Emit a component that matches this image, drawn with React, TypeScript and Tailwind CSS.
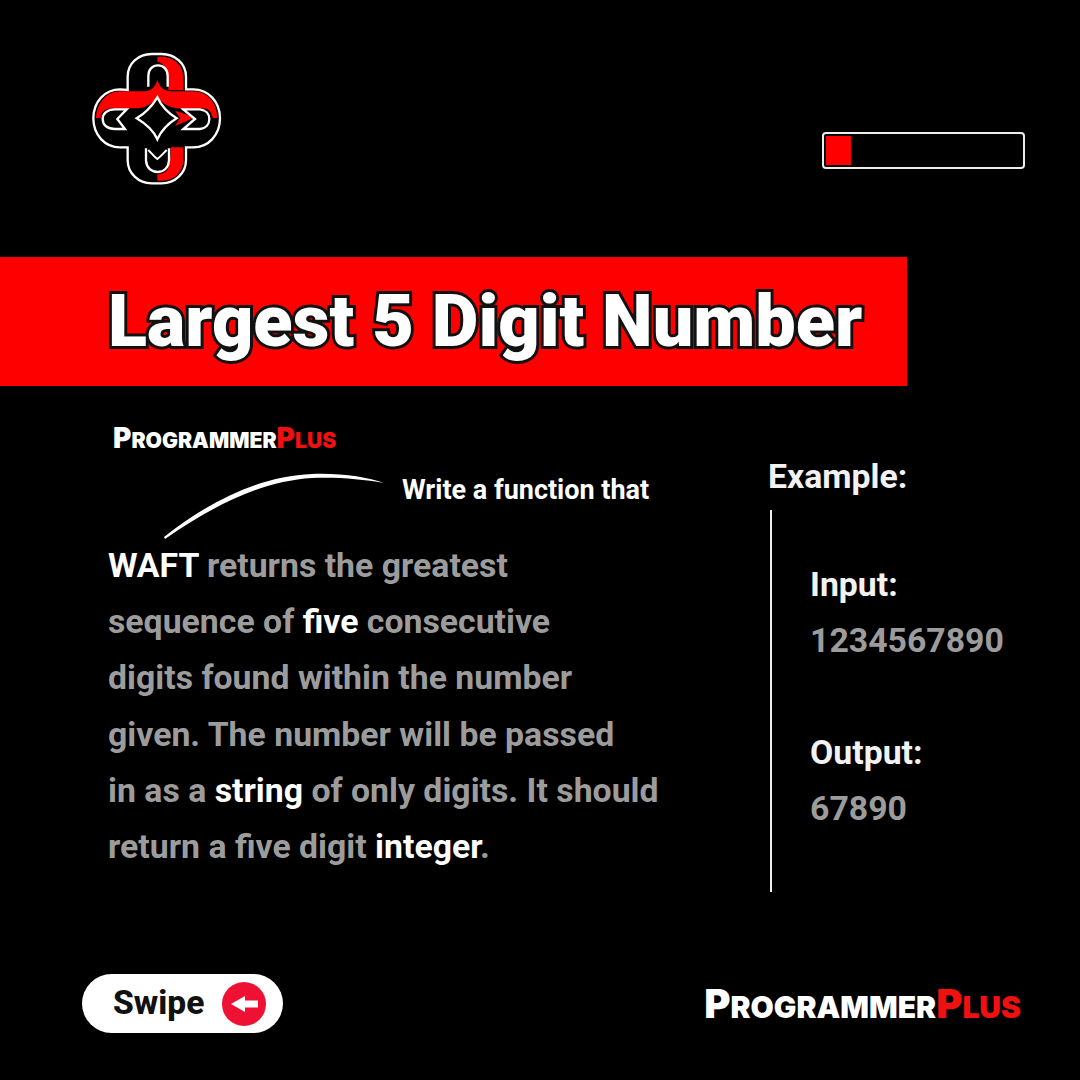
import React from "react";

function Logo() {
    return (
        <svg viewBox="0 0 450 450" className="w-[150px] h-[150px] -mt-[13px] -ml-[12px]" fill="none">
            <path d="M232 50H250C285 52 310 80 310 112V150H265C265 120 265 95 252 78C247 70 240 66 232 66Z" fill="#ff0000"/>
            <path d="M232 120C238 140 250 152 272 154H340C382 154 412 190 412 234H398C395 215 385 205 365 205H300C270 205 245 190 232 170C220 190 195 205 165 205H100C75 205 62 215 62 234H48C50 190 80 154 120 154H195C215 152 226 140 232 120Z" fill="#ff0000"/>
            <path d="M232 422H250C285 420 310 395 310 360V322H272C272 350 270 375 262 390C255 398 245 402 232 403Z" fill="#ff0000"/>
            <path d="M285 212L345 232L285 258L300 235Z" fill="#ff0000"/>
            <path d="M143 150V110C143 70 175 42 215 42H245C285 42 318 70 318 110V148H340C385 148 420 185 420 235C420 285 385 322 340 322H318V360C318 400 285 430 245 430H215C175 430 143 400 143 360V322H120C75 322 40 285 40 235C40 185 75 148 120 148Z" stroke="#fff" strokeWidth="7"/>
            <path d="M205 140V108C205 88 218 76 234 76C250 76 263 88 263 108V140" stroke="#fff" strokeWidth="7"/>
            <path d="M198 325V362C200 385 215 396 232 396C250 396 265 385 267 362V325" stroke="#fff" strokeWidth="7"/>
            <path d="M205 330C215 340 222 350 232 357C242 350 250 340 260 330" stroke="#fff" strokeWidth="6"/>
            <path d="M232 172C245 200 265 220 290 235C265 250 245 270 232 298C220 270 195 250 170 235C195 220 215 200 232 172Z" stroke="#fff" strokeWidth="7"/>
            <path d="M140 208H105C82 208 68 220 68 237C68 255 82 267 105 267H135L112 237Z" stroke="#fff" strokeWidth="7"/>
            <path d="M310 208H360C378 210 388 222 388 237C388 253 378 265 360 267H310L345 237Z" stroke="#fff" strokeWidth="7"/>
        </svg>
    );
}

function Brand({big, small, className}: {big: string; small: string; className?: string}) {
    return (
        <div className={"font-['Inter',sans-serif] font-black whitespace-nowrap leading-none " + className}>
            <span className={"text-white " + big}>P</span>
            <span className={"text-white " + small}>ROGRAMMER</span>
            <span className={"text-[#f01010] " + big}>P</span>
            <span className={"text-[#f01010] " + small}>LUS</span>
        </div>
    );
}

const muted = "text-[#9c9c9c]";

export default function App() {
    return (
        <div className="w-[1080px] h-[1080px] bg-black overflow-hidden flex flex-col font-['Roboto',sans-serif]">
            <header className="flex justify-between items-start h-[130px] mt-[53px] pl-[92px] pr-[55px]">
                <div className="w-[128px] h-[130px]"><Logo/></div>
                <div className="w-[203px] h-[37px] mt-[79px] border-2 border-[#ededed] rounded-[4px] p-[2px]">
                    <div className="w-[25px] h-full bg-[#ff0000]"></div>
                </div>
            </header>

            <section className="mt-[74px] w-[907px] h-[129px] bg-[#ff0000] flex items-center pl-[108px]">
                <h1 className="text-[72px] font-black text-white leading-none whitespace-nowrap [-webkit-text-stroke:6px_#111] [paint-order:stroke_fill]">
                    Largest 5 Digit Number
                </h1>
            </section>

            <main className="flex">
                <div className="w-[662px] pl-[108px]">
                    <Brand big="text-[28px]" small="text-[21.2px]" className="mt-[38px] ml-[5px]"/>
                    <div className="flex items-start h-[78px] ml-[54px] mt-[8px]">
                        <svg width="226" height="70" viewBox="0 0 226 70" fill="none" className="shrink-0 mt-[11px]">
                            <path d="M2 66C50 28 100 5 150 3C180 2 205 6 222 12C200 8 175 6 150 7C102 10 55 32 3 68Z" fill="#fff"/>
                        </svg>
                        <span className="ml-[14px] mt-[10px] text-[27px] font-bold text-white whitespace-nowrap">Write a function that</span>
                    </div>
                    <p className={"text-[33.8px] font-bold leading-[56.2px] whitespace-nowrap " + muted}>
                        <span className="text-white">WAFT</span> returns the greatest<br/>
                        sequence of <span className="text-white">five</span> consecutive<br/>
                        digits found within the number<br/>
                        given. The number will be passed<br/>
                        in as a <span className="text-white">string</span> of only digits. It should<br/>
                        return a five digit <span className="text-white">integer</span>.
                    </p>
                </div>

                <div className="flex-1 pt-[71px] pl-[106px]">
                    <div className="text-[33.8px] font-bold text-[#f2f2f2] leading-[40px]">Example:</div>
                    <div className="mt-[13px] ml-[2px] h-[382px] border-l-2 border-[#ededed] pl-[38px] pt-[47px] text-[33.8px] font-bold leading-[56px]">
                        <div className="text-[#f2f2f2]">Input:</div>
                        <div className={muted}>1234567890</div>
                        <div className="text-[#f2f2f2] mt-[56px]">Output:</div>
                        <div className={muted}>67890</div>
                    </div>
                </div>
            </main>

            <footer className="mt-auto mb-[47px] flex justify-between items-center pl-[82px] pr-[59px]">
                <div className="w-[201px] h-[59px] bg-white rounded-full flex items-center pl-[31px] gap-[18px]">
                    <span className="text-[33.5px] font-extrabold text-[#111]">Swipe</span>
                    <span className="w-[44px] h-[44px] rounded-full bg-[#ee1133] flex items-center justify-center">
                        <svg width="27" height="16" viewBox="0 0 27 16" fill="#fff"><path d="M0 8L14 0V4.5H27V11.5H14V16Z"/></svg>
                    </span>
                </div>
                <Brand big="text-[40px]" small="text-[30px]"/>
            </footer>
        </div>
    );
}
